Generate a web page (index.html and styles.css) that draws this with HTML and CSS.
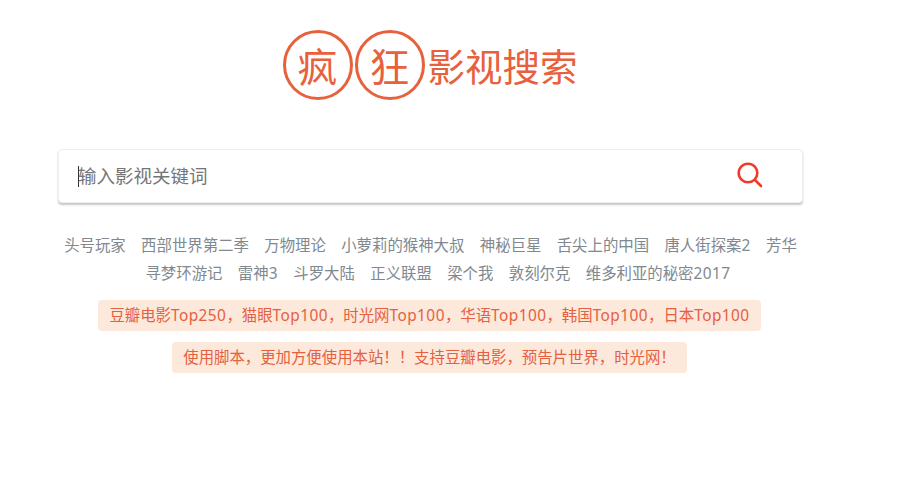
FILE: index.html
```html
<!DOCTYPE html>
<html lang="zh-CN">
<head>
<meta charset="utf-8">
<title>疯狂影视搜索</title>
<link rel="stylesheet" href="styles.css">
</head>
<body>
<main class="page">
  <h1 class="logo">
    <span class="seal">疯</span>
    <span class="seal">狂</span>
    <span class="logo-text">影视搜索</span>
  </h1>
  <form class="search">
    <span class="caret"></span>
    <input class="search-input" type="text" placeholder="输入影视关键词">
    <button class="search-btn" type="button" aria-label="搜索">
      <svg width="28" height="28" viewBox="0 0 28 28" fill="none" stroke="#ee3b2b" stroke-width="2.6" stroke-linecap="round"><circle cx="12" cy="12" r="9.3"/><path d="M19 19l6 6"/></svg>
    </button>
  </form>
  <nav class="hot">
    <div class="hot-row">
      <a>头号玩家</a><a>西部世界第二季</a><a>万物理论</a><a>小萝莉的猴神大叔</a><a>神秘巨星</a><a>舌尖上的中国</a><a>唐人街探案<span class="lat">2</span></a><a>芳华</a>
    </div>
    <div class="hot-row hot-row-offset">
      <a>寻梦环游记</a><a>雷神<span class="lat">3</span></a><a>斗罗大陆</a><a>正义联盟</a><a>梁个我</a><a>敦刻尔克</a><a>维多利亚的秘密<span class="lat">2017</span></a>
    </div>
  </nav>
  <div class="notes">
    <a class="note">豆瓣电影<span class="lat">Top250</span>，猫眼<span class="lat">Top100</span>，时光网<span class="lat">Top100</span>，华语<span class="lat">Top100</span>，韩国<span class="lat">Top100</span>，日本<span class="lat">Top100</span></a>
    <a class="note">使用脚本，更加方便使用本站！！支持豆瓣电影，预告片世界，时光网！</a>
  </div>
</main>
</body>
</html>
```
FILE: styles.css
```css
* { box-sizing: border-box; }
html, body { margin: 0; height: 100%; background: #fff; overflow: hidden; }
body { font-family: "Noto Sans", "Noto Sans CJK SC", sans-serif; }
.page { width: 861px; display: flex; flex-direction: column; align-items: center; padding-top: 30px; }
.logo { margin: 0; height: 70px; display: flex; align-items: center; gap: 2px; font-weight: 400; color: #e8603c; font-family: "Noto Sans CJK SC", sans-serif; }
.seal { width: 70px; height: 70px; border: 3px solid #e8603c; border-radius: 50%; display: flex; align-items: center; justify-content: center; font-size: 40px; line-height: 1; }
.logo-text { font-size: 37.5px; line-height: 1; margin-left: 1px; width: 151px; white-space: nowrap; font-weight: 400; }
.search { position: relative; width: 745px; height: 54px; margin-top: 49px; display: flex; align-items: center; background: #fff; border-radius: 4px; border: 1px solid #eee; box-shadow: 0 2px 2px rgba(0,0,0,.22); }
.caret { position: absolute; left: 19px; top: 16px; width: 1px; height: 21px; background: #333; }
.search-input { flex: 1; min-width: 0; height: 100%; padding: 0 0 2px 19px; border: 0; outline: 0; background: transparent; font: 18.5px "Noto Sans CJK SC", sans-serif; color: #333; }
.search-input::placeholder { color: #757575; opacity: 1; }
.search-btn { width: 106px; height: 100%; display: flex; align-items: center; justify-content: center; padding: 0 0 2px 1px; border: 0; background: transparent; }
.hot { width: 745px; margin-top: 29px; font-size: 15.4px; line-height: 28px; color: #808890; }
.hot-row { display: flex; justify-content: center; gap: 15.4px; white-space: nowrap; }
.hot-row-offset { padding-left: 15px; }
.notes { display: flex; flex-direction: column; align-items: center; gap: 11px; margin-top: 12px; padding-right: 2px; }
.note { padding: 0 11.5px; height: 31px; line-height: 31px; background: #fde8dc; border-radius: 4px; font-size: 15.4px; color: #e4603f; white-space: nowrap; }
.lat { letter-spacing: .45px; }
```
